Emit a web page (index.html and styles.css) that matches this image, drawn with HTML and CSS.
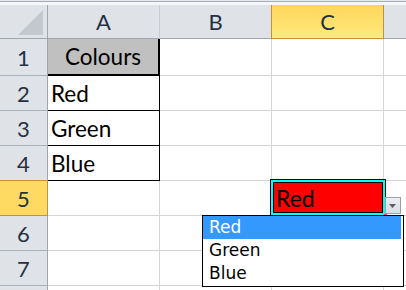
FILE: index.html
```html
<!DOCTYPE html>
<html>
<head>
<meta charset="utf-8">
<link rel="stylesheet" href="styles.css">
</head>
<body>
<div class="app">
  <div class="topstrip"></div>
  <div class="sheet">
    <div class="hd corner"><svg width="47" height="33" viewBox="0 0 47 33"><polygon points="18,30 43,30 43,5" fill="#c3c7ce"/></svg></div>
    <div class="hd col">A</div>
    <div class="hd col sel-prev">B</div>
    <div class="hd col sel">C</div>
    <div class="hd col last"></div>

    <div class="hd row">1</div>
    <div class="c a1">Colours</div>
    <div class="c"></div>
    <div class="c"></div>
    <div class="c last"></div>

    <div class="hd row">2</div>
    <div class="c tb">Red</div>
    <div class="c"></div>
    <div class="c"></div>
    <div class="c last"></div>

    <div class="hd row">3</div>
    <div class="c tb">Green</div>
    <div class="c"></div>
    <div class="c"></div>
    <div class="c last"></div>

    <div class="hd row sel-prev">4</div>
    <div class="c tb">Blue</div>
    <div class="c"></div>
    <div class="c"></div>
    <div class="c last"></div>

    <div class="hd row sel">5</div>
    <div class="c"></div>
    <div class="c"></div>
    <div class="c"></div>
    <div class="c last"></div>

    <div class="hd row">6</div>
    <div class="c"></div>
    <div class="c"></div>
    <div class="c"></div>
    <div class="c last"></div>

    <div class="hd row">7</div>
    <div class="c"></div>
    <div class="c"></div>
    <div class="c"></div>
    <div class="c last"></div>

    <div class="hd row"></div>
    <div class="c"></div>
    <div class="c"></div>
    <div class="c"></div>
    <div class="c last"></div>

    <div class="active">Red<span class="handle"></span></div>
    <div class="ddbtn"><svg width="14" height="15" viewBox="0 0 14 15"><polygon points="3,6 10,6 6.5,10" fill="#5a5f66"/></svg></div>
    <div class="list">
      <div class="item on">Red</div>
      <div class="item">Green</div>
      <div class="item">Blue</div>
    </div>
  </div>
</div>
</body>
</html>
```
FILE: styles.css
```css
html, body {
  margin: 0;
  padding: 0;
  background: #ffffff;
}
.app {
  width: 406px;
  height: 290px;
  overflow: hidden;
  font-family: Lato, "Open Sans", sans-serif;
}
.topstrip {
  height: 5px;
  box-sizing: border-box;
  background: #f4f6f8;
  border-top: 1px solid #e6e9ee;
  box-shadow: inset 0 1px 0 #a5adb7;
}
.sheet {
  position: relative;
  display: grid;
  grid-template-columns: 48px 112px 112px 112px 22px;
  grid-template-rows: 34px 37px repeat(6, 35px) 10px;
}
.hd {
  box-sizing: border-box;
  background: #dfe2e7;
  border-right: 1px solid #9ea6b0;
  border-bottom: 1px solid #9ea6b0;
  color: #253142;
  font-size: 22px;
  display: flex;
  align-items: center;
  justify-content: center;
}
.hd.col {
  border-right-color: #c9ced5;
}
.hd.corner {
  border-right-color: #9ea6b0;
  align-items: flex-start;
  justify-content: flex-start;
}
.hd.corner svg {
  display: block;
}
.hd.row {
  border-bottom-color: #a9b0b9;
}
.hd.col.sel-prev {
  border-right-color: #c2913b;
}
.hd.row.sel-prev {
  border-bottom-color: #c2913b;
}
.hd.sel {
  background: linear-gradient(#ffd65c, #ffea7d);
  border-right-color: #c2913b;
  border-bottom-color: #c2913b;
}
.hd.row.sel {
  background: #ffda62;
}
.hd.last {
  border-right: none;
}
.c {
  box-sizing: border-box;
  border-right: 1px solid #d4d4d4;
  border-bottom: 1px solid #d4d4d4;
  font-size: 22.5px;
  color: #000;
  display: flex;
  align-items: center;
  padding-left: 3px;
}
.c.last {
  border-right: none;
}
.a1 {
  background: #c0c0c0;
  justify-content: center;
  padding-left: 0;
  border-right: 2px solid #000;
  border-bottom: 2px solid #000;
}
.tb {
  border-right: 1px solid #000;
  border-bottom: 1px solid #000;
}
.active {
  position: absolute;
  left: 270px;
  top: 174px;
  width: 116px;
  height: 37px;
  box-sizing: border-box;
  border: 1px solid #000;
  box-shadow: inset 0 0 0 2px #00ffff, inset 0 0 0 3px #000;
  background: #ff0000;
  font-size: 23px;
  color: #000;
  display: flex;
  align-items: center;
  padding-left: 5px;
}
.handle {
  position: absolute;
  right: -2px;
  bottom: -2px;
  width: 3px;
  height: 3px;
  background: #ff4040;
}
.ddbtn {
  position: absolute;
  left: 385px;
  top: 192px;
  width: 16px;
  height: 17px;
  box-sizing: border-box;
  border: 1px solid #9ba0a7;
  background: linear-gradient(#eceef1, #dadde2);
}
.ddbtn svg {
  display: block;
}
.list {
  position: absolute;
  left: 202px;
  top: 210px;
  width: 202px;
  height: 72px;
  box-sizing: border-box;
  border: 1px solid #000;
  background: #fff;
  padding: 0 2px 0 0;
  font-family: "DejaVu Sans", sans-serif;
  font-size: 17px;
  color: #000;
}
.item {
  height: 23px;
  line-height: 23px;
  padding-left: 6px;
}
.item.on {
  background: #3399ff;
  color: #fff;
}
```
